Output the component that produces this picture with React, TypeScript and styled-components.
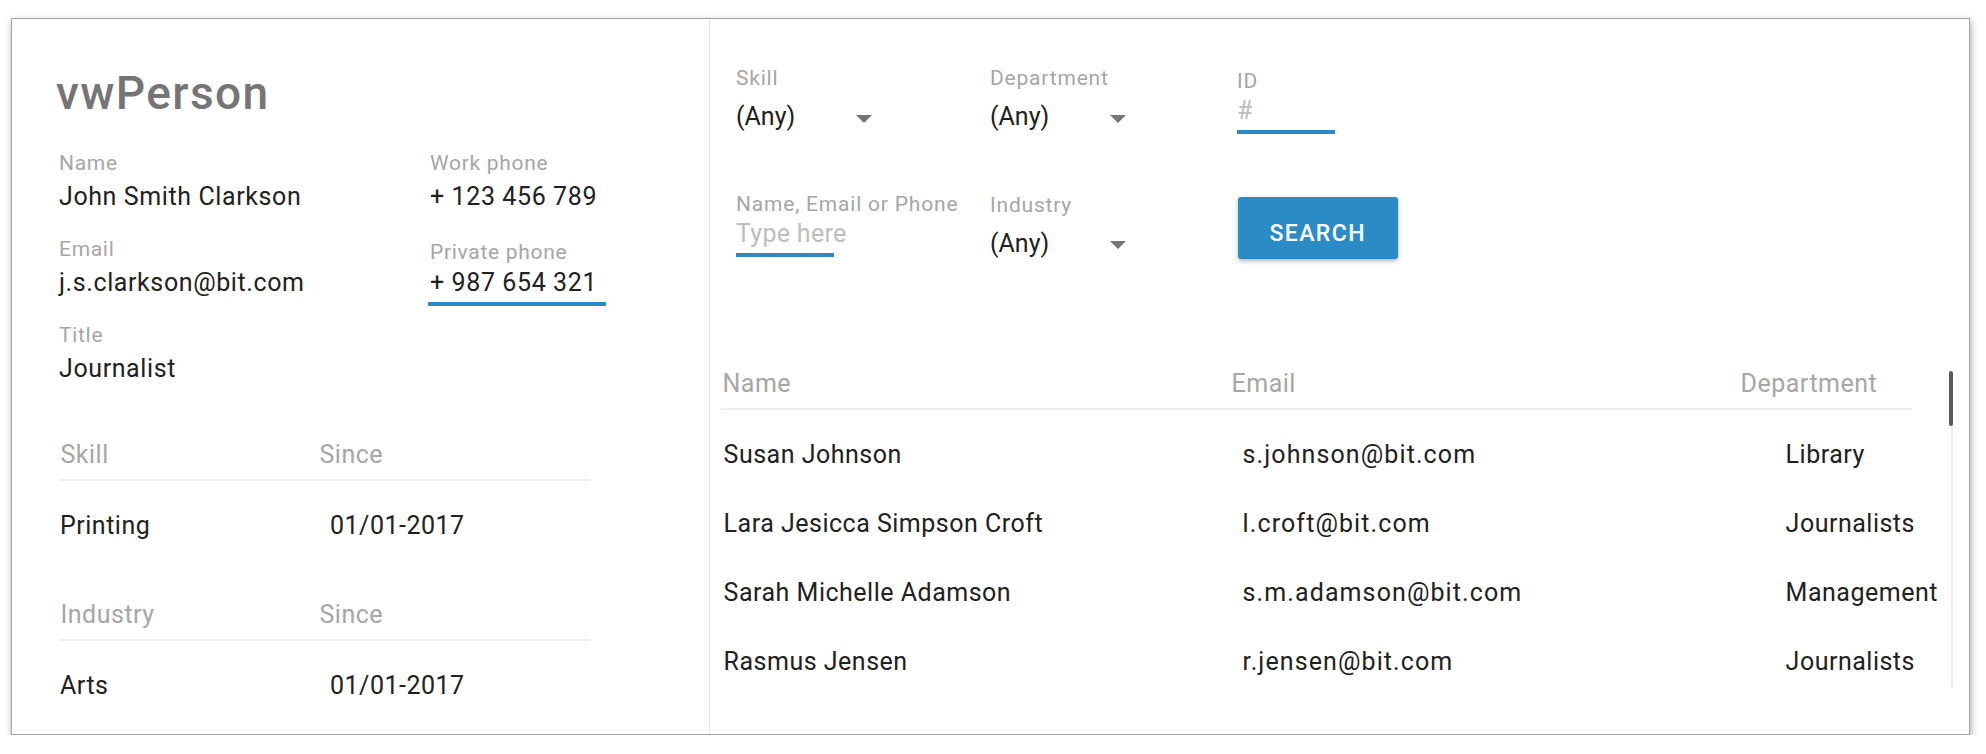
import React from "react";
import styled, { createGlobalStyle } from "styled-components";

const GlobalStyle = createGlobalStyle`
  html, body { margin: 0; padding: 0; background: #ffffff; }
  body { font-family: Roboto, "Noto Sans", Arial, sans-serif; color: #212121; }
  * { box-sizing: border-box; }
`;

const BLUE = "#2a8bc5";
const LABEL = "#a6a6a6";
const TEXT = "#212121";

const Page = styled.div`
  padding: 18px 0 0 11px;
`;

const Card = styled.div`
  width: 1959px;
  height: 717px;
  border: 1px solid #a3a3a3;
  box-shadow: 1px 3px 7px rgba(0, 0, 0, 0.35);
  background: #ffffff;
  display: flex;
`;

/* ---------- left panel ---------- */

const LeftPanel = styled.section`
  width: 698px;
  flex: none;
  border-right: 1px solid #e3e3e3;
  padding: 50px 0 0 44px;
`;

const Title = styled.h1`
  margin: 0;
  font-size: 46px;
  line-height: 48px;
  font-weight: 500;
  color: #757575;
  letter-spacing: 1.4px;
`;

const FieldGrid = styled.div`
  display: grid;
  grid-template-columns: 371px 178px;
  row-gap: 17px;
  margin: 34px 0 0 1px;
`;

const Field = styled.div<{ $focused?: boolean }>`
  display: flex;
  flex-direction: column;
  padding-left: 2px;
  border-bottom: 4px solid ${(p) => (p.$focused ? BLUE : "transparent")};
`;

const FieldLabel = styled.div<{ $shift?: boolean }>`
  padding-top: ${(p) => (p.$shift ? 2.5 : 0)}px;
  height: 24px;
  font-size: 21px;
  line-height: 24px;
  color: ${LABEL};
  letter-spacing: 0.7px;
  white-space: nowrap;
`;

const FieldValue = styled.div`
  margin-top: 4.5px;
  padding-bottom: 2.5px;
  font-size: 25px;
  line-height: 34px;
  color: ${TEXT};
  letter-spacing: 0.6px;
  white-space: nowrap;
`;

const MiniTable = styled.div<{ $gap: number }>`
  width: 531px;
  margin: ${(p) => p.$gap}px 0 0 3px;
`;

const MiniHead = styled.div`
  display: grid;
  grid-template-columns: 259px 1fr;
  padding: 0 0 9px 1.5px;
  border-bottom: 2px solid #efefef;
  font-size: 25px;
  line-height: 30px;
  color: ${LABEL};
  letter-spacing: 0.5px;
`;

const MiniRow = styled.div`
  display: grid;
  grid-template-columns: 270px 1fr;
  padding: 30.5px 0 0 1px;
  font-size: 25px;
  line-height: 30px;
  color: ${TEXT};
  letter-spacing: 0.5px;
`;

/* ---------- right panel ---------- */

const RightPanel = styled.section`
  flex: 1;
  min-width: 0;
  padding: 48px 0 0 11px;
  display: flex;
  flex-direction: column;
`;

const Filters = styled.div`
  display: grid;
  grid-template-columns: 254px 247px 200px;
  grid-template-rows: 126px 66px;
  margin-left: 15px;
`;

const FilterCell = styled.div<{ $offset?: number }>`
  display: flex;
  flex-direction: column;
  align-items: flex-start;
  padding-top: ${(p) => p.$offset ?? 0}px;
`;

const FilterLabel = styled.div`
  font-size: 21px;
  line-height: 22px;
  color: ${LABEL};
  letter-spacing: 0.8px;
  white-space: nowrap;
`;

const SelectBox = styled.div`
  margin-top: 14px;
  width: 144px;
  padding-right: 8px;
  display: flex;
  align-items: center;
  justify-content: space-between;
  font-size: 25px;
  line-height: 28px;
  color: ${TEXT};
`;

const Caret = styled.span`
  width: 0;
  height: 0;
  margin-top: 3px;
  border-left: 8px solid transparent;
  border-right: 8px solid transparent;
  border-top: 8px solid #757575;
`;

const InputBox = styled.div`
  margin-top: 5px;
  width: 98px;
  padding-bottom: 5px;
  border-bottom: 4px solid ${BLUE};
  font-size: 25px;
  line-height: 28px;
  color: #bdbdbd;
  letter-spacing: 0.3px;
  white-space: nowrap;
`;

const SearchButton = styled.button`
  margin: 3.7px 0 0 0.7px;
  width: 160px;
  height: 62px;
  padding: 12px 0 0;
  border: none;
  border-radius: 3px;
  background: #2a8bc6;
  color: #ffffff;
  font-family: inherit;
  font-size: 23px;
  line-height: 28px;
  font-weight: 500;
  letter-spacing: 1.4px;
  text-transform: uppercase;
  box-shadow: 0 2px 4px rgba(0, 0, 0, 0.3);
`;

const Results = styled.div`
  margin-top: 109.5px;
  height: 318.5px;
  display: flex;
`;

const TableWrap = styled.div`
  width: 1228px;
  flex: none;
  overflow: hidden;
`;

const HeadRow = styled.div`
  width: 1191px;
  display: grid;
  grid-template-columns: 509px 509px 173px;
  padding-bottom: 9.2px;
  border-bottom: 2px solid #efefef;
  font-size: 25px;
  line-height: 30px;
  color: ${LABEL};
  letter-spacing: 0.5px;
`;

const HeadCell = styled.div`
  padding-left: 1.5px;
  white-space: nowrap;
`;

const Body = styled.div`
  padding-top: 10.6px;
`;

const BodyRow = styled.div`
  display: grid;
  grid-template-columns: 519px 543px 166px;
  font-size: 25px;
  line-height: 69px;
  color: ${TEXT};
  letter-spacing: 0.5px;
  white-space: nowrap;
`;

const BodyCell = styled.div<{ $wide?: boolean }>`
  padding-left: 2.6px;
  letter-spacing: ${(p) => (p.$wide ? 1.1 : 0.5)}px;
`;

const ScrollBar = styled.div`
  width: 4px;
  flex: none;
  padding-top: 2.5px;
  display: flex;
  flex-direction: column;
`;

const Thumb = styled.div`
  height: 55px;
  background: #5a5a5a;
  border-radius: 2px;
`;

const Track = styled.div`
  flex: 1;
  width: 2px;
  margin-left: 2px;
  background: #ececec;
`;

const people = [
  { name: "Susan Johnson", email: "s.johnson@bit.com", dept: "Library" },
  { name: "Lara Jesicca Simpson Croft", email: "l.croft@bit.com", dept: "Journalists" },
  { name: "Sarah Michelle Adamson", email: "s.m.adamson@bit.com", dept: "Management" },
  { name: "Rasmus Jensen", email: "r.jensen@bit.com", dept: "Journalists" },
];

export default function App() {
  return (
    <>
      <GlobalStyle />
      <Page>
        <Card>
          <LeftPanel>
            <Title>vwPerson</Title>
            <FieldGrid>
              <Field>
                <FieldLabel>Name</FieldLabel>
                <FieldValue>John Smith Clarkson</FieldValue>
              </Field>
              <Field>
                <FieldLabel>Work phone</FieldLabel>
                <FieldValue>+ 123 456 789</FieldValue>
              </Field>
              <Field>
                <FieldLabel>Email</FieldLabel>
                <FieldValue>j.s.clarkson@bit.com</FieldValue>
              </Field>
              <Field $focused>
                <FieldLabel $shift>Private phone</FieldLabel>
                <FieldValue>+ 987 654 321</FieldValue>
              </Field>
              <Field>
                <FieldLabel>Title</FieldLabel>
                <FieldValue>Journalist</FieldValue>
              </Field>
            </FieldGrid>

            <MiniTable $gap={47.5}>
              <MiniHead>
                <div>Skill</div>
                <div>Since</div>
              </MiniHead>
              <MiniRow>
                <div>Printing</div>
                <div>01/01-2017</div>
              </MiniRow>
            </MiniTable>

            <MiniTable $gap={58.5}>
              <MiniHead>
                <div>Industry</div>
                <div>Since</div>
              </MiniHead>
              <MiniRow>
                <div>Arts</div>
                <div>01/01-2017</div>
              </MiniRow>
            </MiniTable>
          </LeftPanel>

          <RightPanel>
            <Filters>
              <FilterCell>
                <FilterLabel>Skill</FilterLabel>
                <SelectBox>
                  <span>(Any)</span>
                  <Caret />
                </SelectBox>
              </FilterCell>
              <FilterCell>
                <FilterLabel>Department</FilterLabel>
                <SelectBox>
                  <span>(Any)</span>
                  <Caret />
                </SelectBox>
              </FilterCell>
              <FilterCell $offset={2.5}>
                <FilterLabel>ID</FilterLabel>
                <InputBox>#</InputBox>
              </FilterCell>
              <FilterCell>
                <FilterLabel>Name, Email or Phone</FilterLabel>
                <InputBox>Type here</InputBox>
              </FilterCell>
              <FilterCell $offset={0.8}>
                <FilterLabel>Industry</FilterLabel>
                <SelectBox>
                  <span>(Any)</span>
                  <Caret />
                </SelectBox>
              </FilterCell>
              <FilterCell>
                <SearchButton>Search</SearchButton>
              </FilterCell>
            </Filters>

            <Results>
              <TableWrap>
                <HeadRow>
                  <HeadCell>Name</HeadCell>
                  <HeadCell>Email</HeadCell>
                  <HeadCell>Department</HeadCell>
                </HeadRow>
                <Body>
                  {people.map((p) => (
                    <BodyRow key={p.email}>
                      <BodyCell>{p.name}</BodyCell>
                      <BodyCell $wide>{p.email}</BodyCell>
                      <BodyCell>{p.dept}</BodyCell>
                    </BodyRow>
                  ))}
                </Body>
              </TableWrap>
              <ScrollBar>
                <Thumb />
                <Track />
              </ScrollBar>
            </Results>
          </RightPanel>
        </Card>
      </Page>
    </>
  );
}
